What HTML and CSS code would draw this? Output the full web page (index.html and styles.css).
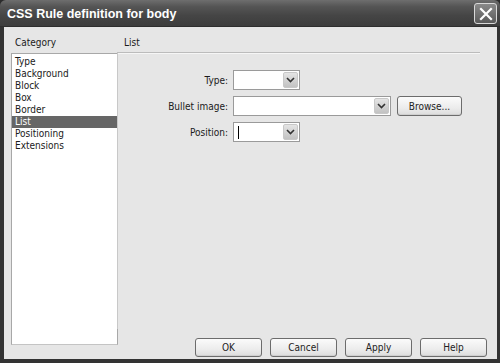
FILE: index.html
```html
<!DOCTYPE html>
<html>
<head>
<meta charset="utf-8">
<link rel="stylesheet" href="styles.css">
</head>
<body>
<div class="window">
  <div class="titlebar">
    <span class="title">CSS Rule definition for body</span>
    <span class="close">
      <svg width="14" height="14" viewBox="0 0 14 14"><path d="M2 2 L12 12 M12 2 L2 12" stroke="#fff" stroke-width="2.2" stroke-linecap="square"/></svg>
    </span>
  </div>
  <div class="content">
    <div class="left">
      <div class="caption">Category</div>
      <ul class="listbox">
        <li>Type</li>
        <li>Background</li>
        <li>Block</li>
        <li>Box</li>
        <li>Border</li>
        <li class="selected">List</li>
        <li>Positioning</li>
        <li>Extensions</li>
      </ul>
    </div>
    <div class="right">
      <div class="heading">List</div>
      <div class="panel">
        <div class="form">
          <label>Type:</label>
          <div class="select short"><span class="val"></span><span class="arrow"><svg width="9" height="6" viewBox="0 0 9 6"><path d="M1 1 L4.5 4.5 L8 1" fill="none" stroke="#333" stroke-width="1.6"/></svg></span></div>
          <span></span>
          <label>Bullet image:</label>
          <div class="select long"><span class="val"></span><span class="arrow"><svg width="9" height="6" viewBox="0 0 9 6"><path d="M1 1 L4.5 4.5 L8 1" fill="none" stroke="#333" stroke-width="1.6"/></svg></span></div>
          <button class="btn browse">Browse...</button>
          <label>Position:</label>
          <div class="select short"><span class="val"><span class="caret"></span></span><span class="arrow"><svg width="9" height="6" viewBox="0 0 9 6"><path d="M1 1 L4.5 4.5 L8 1" fill="none" stroke="#333" stroke-width="1.6"/></svg></span></div>
          <span></span>
        </div>
      </div>
      <div class="buttons">
        <button class="btn">OK</button>
        <button class="btn">Cancel</button>
        <button class="btn">Apply</button>
        <button class="btn">Help</button>
      </div>
    </div>
  </div>
</div>
</body>
</html>
```

FILE: styles.css
```css
html, body {
  margin: 0;
  padding: 0;
  background: #2b2b2b;
}
.window {
  width: 500px;
  height: 363px;
  display: flex;
  flex-direction: column;
  background: #333;
  box-sizing: border-box;
  border-radius: 6px 6px 0 0;
  overflow: hidden;
  font-family: "DejaVu Sans Condensed", "DejaVu Sans", "Liberation Sans", sans-serif;
  font-stretch: condensed;
  font-size: 10px;
  color: #1a1a1a;
}
.titlebar {
  height: 27px;
  flex: none;
  display: flex;
  align-items: center;
  justify-content: space-between;
  padding: 0 3px 0 7px;
  background: linear-gradient(#6e6e6e 0%, #555 25%, #454545 60%, #3d3d3d 100%);
  border-bottom: 1px solid #2e2e2e;
  box-sizing: border-box;
}
.title {
  font-family: "Liberation Sans", Arial, sans-serif;
  font-stretch: normal;
  font-weight: bold;
  font-size: 12.5px;
  color: #fff;
  margin-top: 1px;
}
.close {
  width: 21px;
  height: 19px;
  margin-top: 1px;
  border: 1px solid #d8d8d8;
  border-radius: 3px;
  background: linear-gradient(#8a8a8a, #5a5a5a);
  display: flex;
  align-items: center;
  justify-content: center;
}
.content {
  flex: 1;
  background: #e6e6e6;
  margin: 0 3px 4px 4px;
  padding: 10px 17px 2px 7px;
  display: grid;
  grid-template-columns: 106px 1fr;
}
.left {
  display: flex;
  flex-direction: column;
}
.caption {
  height: 16px;
  padding-left: 4px;
}
.listbox {
  margin: 0;
  padding: 2px 0 0 0;
  list-style: none;
  width: 107px;
  height: 292px;
  box-sizing: border-box;
  background: #fff;
  border: 1px solid #a8a8a8;
  border-bottom-color: #c4c4c4;
}
.listbox li {
  height: 12px;
  line-height: 12px;
  padding-left: 3px;
}
.listbox li.selected {
  background: #666;
  color: #fff;
}
.right {
  display: flex;
  flex-direction: column;
}
.heading {
  height: 15px;
  padding-left: 7px;
  border-bottom: 1px solid #bcbcbc;
  box-shadow: 0 1px 0 #f6f6f6;
}
.panel {
  flex: 1;
  border-left: 1px solid #c8c8c8;
  margin-bottom: 9px;
  padding-top: 17px;
}
.form {
  display: grid;
  grid-template-columns: 110px auto 1fr;
  column-gap: 5px;
  row-gap: 6px;
  align-items: center;
}
.form label {
  text-align: right;
}
.select {
  height: 20px;
  box-sizing: border-box;
  background: #fff;
  border: 1px solid #9a9a9a;
  display: flex;
  align-items: center;
  justify-content: space-between;
  padding: 0 1px 0 4px;
}
.select.short { width: 67px; }
.select.long { width: 158px; }
.val {
  display: flex;
  align-items: center;
}
.caret {
  width: 1px;
  height: 13px;
  background: #000;
}
.arrow {
  width: 15px;
  height: 16px;
  border-radius: 2px;
  background: linear-gradient(#e4e4e4, #c2c2c2);
  border: 1px solid #c8c8c8;
  box-sizing: border-box;
  display: flex;
  align-items: center;
  justify-content: center;
}
.btn {
  font-family: "DejaVu Sans Condensed", "DejaVu Sans", "Liberation Sans", sans-serif;
  font-stretch: condensed;
  font-size: 10px;
  color: #222;
  height: 19px;
  padding: 0;
  border: 1px solid #6c6c6c;
  border-radius: 3px;
  background: linear-gradient(#fbfbfb, #ececec 60%, #dcdcdc);
  box-shadow: inset 0 -1px 0 #cfcfcf;
}
.browse {
  width: 65px;
  height: 20px;
  justify-self: start;
  margin-left: 1px;
}
.buttons {
  display: flex;
  justify-content: flex-end;
  gap: 8px;
  margin-right: -7px;
}
.buttons .btn {
  width: 67px;
}
```
